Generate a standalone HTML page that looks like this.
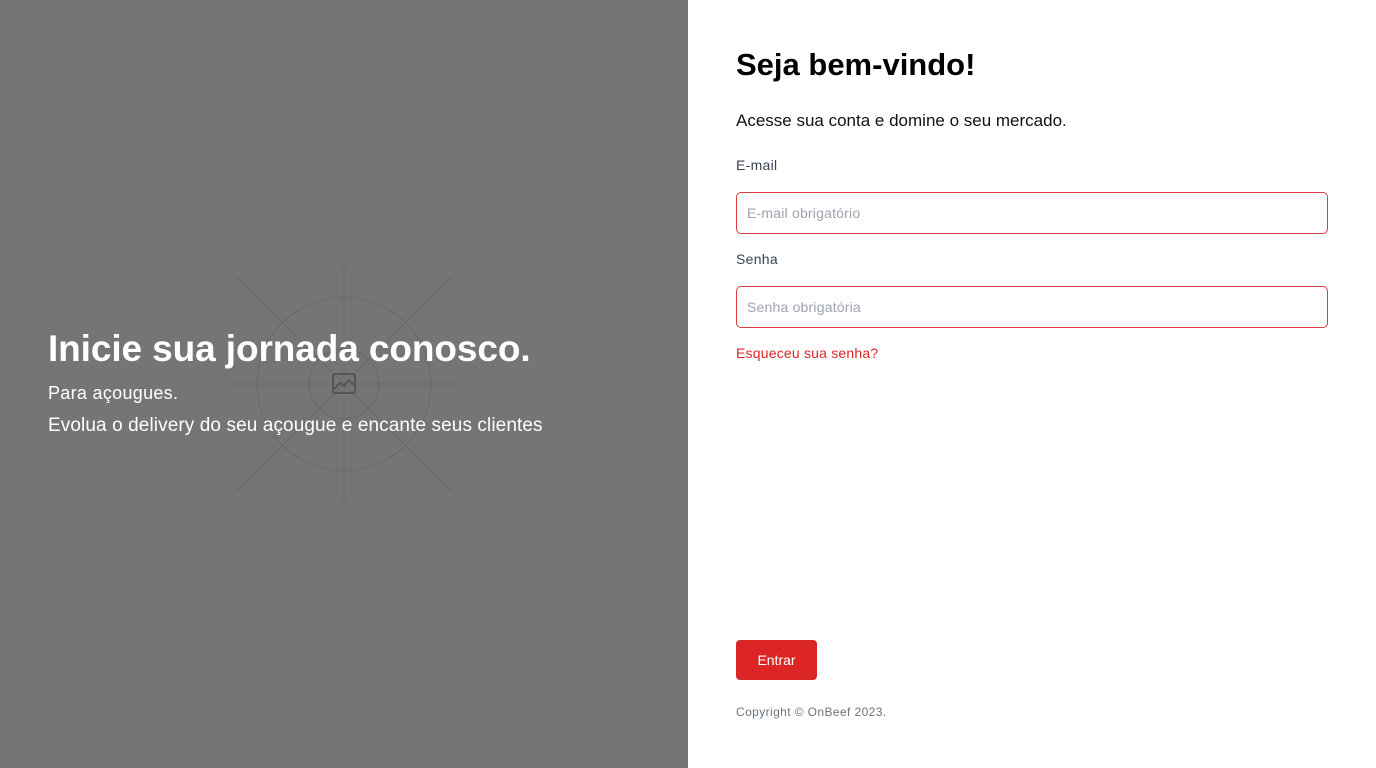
<!DOCTYPE html>
<html><head><meta charset="utf-8"><style>
*{box-sizing:border-box;margin:0;padding:0}
body{width:1376px;height:768px;overflow:hidden;font-family:"Liberation Sans",sans-serif;background:#fff;position:relative}
.left{position:absolute;left:0;top:0;width:688px;height:768px;background:#757575;color:#fff}
.left svg{position:absolute;left:226px;top:266px}
.h1{position:absolute;left:48px;top:328px;font-size:37px;font-weight:bold;letter-spacing:-0.1px}
.p1{position:absolute;left:48px;top:383px;font-size:18px;letter-spacing:0.3px}
.p2{position:absolute;left:48px;top:415px;font-size:19px;letter-spacing:0.1px}
.r{position:absolute;left:736px}
.inp{width:592px;height:42px;border:1px solid #dc3b3b;border-radius:5px;font-size:14px;color:#9ca3af;padding:12px 10px;letter-spacing:0.2px}
</style></head><body>
<div class="left">
<svg width="236" height="236" viewBox="0 0 236 236" fill="none" stroke="#6a6a6a" stroke-width="1">
<circle cx="118" cy="118" r="87"/><circle cx="118" cy="118" r="35"/>
<line x1="118" y1="0" x2="118" y2="236"/><line x1="0" y1="118" x2="236" y2="118"/>
<line x1="10" y1="10" x2="226" y2="226"/><line x1="226" y1="10" x2="10" y2="226"/>
<rect x="107" y="108" width="22" height="19" rx="2" stroke="#555" stroke-width="2"/>
<path d="M108 123l6-6 4 3 5-6 5 5" stroke="#555" stroke-width="2"/>
</svg>
<div class="h1">Inicie sua jornada conosco.</div>
<div class="p1">Para açougues.</div>
<div class="p2">Evolua o delivery do seu açougue e encante seus clientes</div>
</div>
<div class="r" style="top:47px;font-size:31px;font-weight:bold;color:#000">Seja bem-vindo!</div>
<div class="r" style="top:111px;font-size:17px;color:#111">Acesse sua conta e domine o seu mercado.</div>
<div class="r" style="top:157px;font-size:14px;color:#374151;letter-spacing:0.3px">E-mail</div>
<div class="r inp" style="top:192px">E-mail obrigatório</div>
<div class="r" style="top:251px;font-size:14px;color:#374151;letter-spacing:0.3px">Senha</div>
<div class="r inp" style="top:286px">Senha obrigatória</div>
<div class="r" style="top:345px;font-size:14px;color:#dc2626;letter-spacing:0.2px">Esqueceu sua senha?</div>
<div class="r" style="top:640px;width:81px;height:40px;background:#dc2626;border-radius:4px;color:#fff;font-size:14px;text-align:center;line-height:40px">Entrar</div>
<div class="r" style="top:705px;font-size:12px;color:#6b7280;letter-spacing:0.4px">Copyright © OnBeef 2023.</div>
</body></html>
